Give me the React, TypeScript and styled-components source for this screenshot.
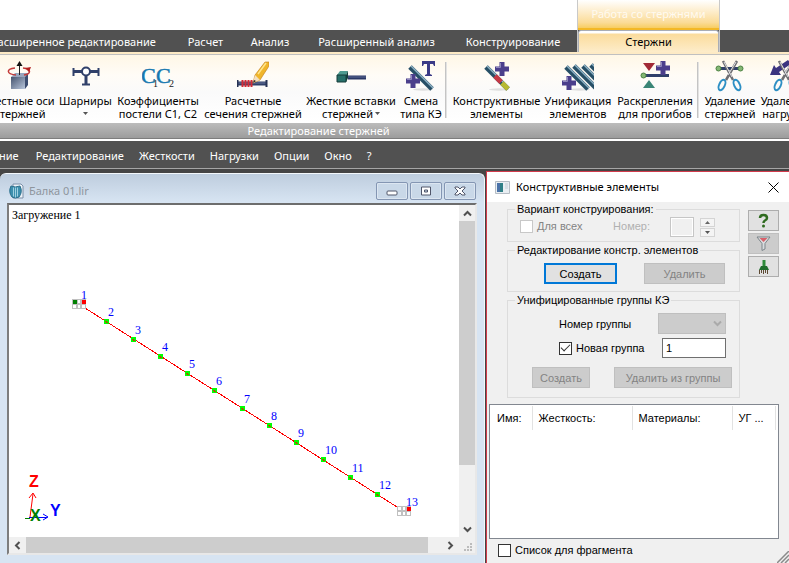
import React from "react";
import styled, { createGlobalStyle, css } from "styled-components";

const UI = `"Noto Sans", "Open Sans", sans-serif`;
const DIALOG = `"Liberation Sans", Arial, sans-serif`;
const SERIF = `"Liberation Serif", "Times New Roman", serif`;

const GlobalStyle = createGlobalStyle`
  *, *::before, *::after { box-sizing: border-box; }
  html, body, #root { height: 100%; }
  body { margin: 0; background: #515151; font: 11px/16px ${UI}; color: #000; overflow: hidden; }
  button, input, select { font: inherit; color: inherit; margin: 0; padding: 0; border-radius: 0; }
  svg { display: block; flex: none; }
`;

const Page = styled.div`
  display: flex;
  flex-direction: column;
  height: 100vh;
  overflow: hidden;
`;

/* ---------- ribbon ---------- */

const TopArea = styled.header`
  display: flex;
  flex: none;
  white-space: nowrap;
  background: linear-gradient(#fff 30px, #515151 30px);
`;

const TabStrip = styled.nav`
  display: flex;
  flex: none;
  width: 577px;
  height: 52px;
  padding: 32px 0 0;
  justify-content: flex-end;
`;

const Tab = styled.button<{ $width: number }>`
  flex: none;
  width: ${(p) => p.$width}px;
  height: 20px;
  border: 0;
  background: none;
  color: #fff;
  text-align: center;
  white-space: nowrap;
`;

const ContextGroup = styled.div`
  display: flex;
  flex-direction: column;
  width: 143px;
  height: 52px;
  border: solid #c9c9c9;
  border-width: 0 1px;
`;

const ContextTitle = styled.div`
  height: 30px;
  padding-top: 6px;
  text-align: center;
  color: #fffaf0;
  background: linear-gradient(#fff, #fdebc6 45%, #fbdc98 80%, #f7cd62);
  border-bottom: 2px solid #f3b827;
`;

const ActiveTab = styled.button`
  flex: 1;
  border: 1px solid #a9adb5;
  border-bottom: 0;
  border-radius: 3px 3px 0 0;
  background: linear-gradient(#fff 0 2px, #fbdc9c 3px, #fdecc9);
  text-align: center;
`;

const RibbonBar = styled.section`
  flex: none;
  border-top: 2px solid #fdeac5;
  background: #c0c0c0;
`;

const RibbonItems = styled.div`
  display: flex;
  height: 68px;
  margin-top: 1px;
  padding-top: 5px;
  overflow: hidden;
  background: linear-gradient(#fff7e6, #fffcf7 30%, #fafafa 55%, #fff);
`;

const RibbonButton = styled.button<{ $width: number; $clipped?: boolean }>`
  display: flex;
  flex-direction: column;
  align-items: center;
  flex: none;
  width: ${(p) => p.$width}px;
  margin-left: ${(p) => (p.$clipped ? "-17px" : "0")};
  border: 0;
  background: none;
  line-height: 13px;
  white-space: nowrap;
`;

const RibbonText = styled.span`
  display: flex;
  flex-direction: column;
  align-items: center;
  margin-top: 2px;
`;

const RibbonLine = styled.span`
  display: flex;
  align-items: center;
  gap: 2px;
  height: 13px;
`;

const RibbonDivider = styled.div`
  flex: none;
  width: 2px;
  height: 56px;
  margin: 2px 4px 0 1px;
  border-left: 1px solid #c4c4c4;
  border-right: 1px solid #e2e2e2;
`;

const RibbonCaption = styled.div`
  height: 16px;
  padding-right: 152px;
  line-height: 16px;
  text-align: center;
  color: #fff;
  background: linear-gradient(#bcbcbc, #9c9c9c);
  border-bottom: 1px solid #7d7d7d;
`;

const MenuBar = styled.nav`
  display: flex;
  flex: none;
  align-items: center;
  gap: 15px;
  height: 30px;
  padding-top: 2px;
  border-top: 2px solid #fff;
  border-bottom: 1px solid #a5a5a5;
  background: #515151;
`;

const MenuItem = styled.button<{ $first?: boolean }>`
  border: 0;
  background: none;
  color: #fff;
  white-space: nowrap;
  margin: ${(p) => (p.$first ? "0 2px 0 -1px" : "0")};
`;

/* ---------- workspace ---------- */

const Workspace = styled.main`
  display: grid;
  grid-template-columns: minmax(0, 1fr) 303px;
  flex: 1;
  min-height: 0;
  padding-top: 1px;
  column-gap: 1px;
  background: #454545;
`;

const ChildWindow = styled.section`
  display: flex;
  flex-direction: column;
  min-height: 0;
  margin-top: 3px;
  padding: 0 7px 8px;
  border: solid #f4f8fc;
  border-width: 1px 1px 0 0;
  border-radius: 6px 6px 0 0;
  background: linear-gradient(#becdde, #d7e4f2 28px);
`;

const ChildTitle = styled.header`
  display: flex;
  align-items: center;
  height: 29px;
  padding: 5px 1px 0 2px;
  gap: 5px;
  color: #8e959d;
`;

const ChildName = styled.h1`
  flex: 1;
  margin: 0;
  font: 11px/16px ${UI};
`;

const CaptionButtons = styled.div`
  display: flex;
  gap: 2px;
`;

const CaptionButton = styled.button`
  display: grid;
  place-items: center;
  width: 32px;
  height: 18px;
  border: 1px solid #8496b3;
  border-radius: 2px;
  background: #c9d8e8;
  box-shadow: inset 0 0 0 1px #dce6f1;
`;

const ViewFrame = styled.div`
  display: grid;
  grid-template-columns: minmax(0, 1fr) 16px;
  grid-template-rows: minmax(0, 1fr) 16px;
  flex: 1;
  min-height: 0;
  border: 2px solid;
  border-color: #6d6d6d #e8e8e8 #e8e8e8 #7d7d7d;
  background: #fff;
`;

const Model = styled.svg`
  width: 100%;
  height: 100%;
  min-height: 0;
`;

const ScrollTrack = styled.div<{ $horizontal?: boolean }>`
  display: flex;
  flex-direction: ${(p) => (p.$horizontal ? "row" : "column")};
  background: #f0f0f0;
`;

const ScrollArrow = styled.button`
  display: grid;
  place-items: center;
  flex: none;
  width: 17px;
  height: 16px;
  border: 0;
  background: none;
`;

const ScrollThumb = styled.div<{ $grow: number }>`
  flex: ${(p) => p.$grow} 1 0;
  background: #cdcdcd;
`;

const ScrollRest = styled.div<{ $grow: number }>`
  flex: ${(p) => p.$grow} 1 0;
`;

const Grip = styled.div`
  display: flex;
  align-items: flex-end;
  justify-content: flex-end;
  padding: 0 2px 1px 0;
  background: #f0f0f0;
`;

/* ---------- dialog ---------- */

const Dialog = styled.aside`
  display: flex;
  flex-direction: column;
  min-height: 0;
  margin-top: 1px;
  border: solid #d13b4c;
  border-width: 1px 0 0 1px;
  background: #f0f0f0;
  font: 11px/14px ${DIALOG};
  white-space: nowrap;
`;

const DialogTitle = styled.header`
  display: flex;
  flex: none;
  align-items: center;
  gap: 6px;
  height: 30px;
  padding: 0 10px 0 8px;
  background: #fff;
`;

const DialogName = styled.h2`
  flex: 1;
  margin: 0;
  font: 11px/16px ${UI};
`;

const CloseButton = styled.button`
  border: 0;
  background: none;
`;

const DialogBody = styled.div`
  display: flex;
  flex: none;
  gap: 8px;
  padding: 0 10px 0 20px;
`;

const Groups = styled.div`
  display: flex;
  flex-direction: column;
  gap: 1px;
  flex: 1;
  min-width: 0;
`;

const Group = styled.fieldset<{ $height: number }>`
  display: flex;
  flex-direction: column;
  height: ${(p) => p.$height}px;
  min-width: 0;
  margin: 0;
  padding: 0 7px;
  border: 1px solid #dcdcdc;
`;

const Legend = styled.legend`
  padding: 0 2px;
`;

const VariantRow = styled.div`
  display: flex;
  align-items: flex-start;
  padding: 3px 17px 0 5px;
  color: #838383;
`;

const CheckLabel = styled.label<{ $wide?: boolean }>`
  display: flex;
  align-items: center;
  gap: 4px;
  height: 14px;
  ${(p) => p.$wide && css`flex: 1;`}
`;

const Check = styled.input<{ $faint?: boolean }>`
  appearance: none;
  display: grid;
  place-items: center;
  width: 13px;
  height: 13px;
  border: 1px solid ${(p) => (p.$faint ? "#c8c8c8" : "#333")};
  background: #fff;
  &:checked::before {
    content: "";
    width: 9px;
    height: 5px;
    margin-top: -3px;
    border: solid #333;
    border-width: 0 0 1px 1px;
    rotate: -45deg;
  }
`;

const NumberLabel = styled.label`
  margin-right: 20px;
  color: #b0b0b0;
`;

const NumberBox = styled.input`
  width: 24px;
  height: 20px;
  margin-top: -2px;
  border: 1px solid #c6c6c6;
  background: #f0f0f0;
  box-shadow: inset 0 0 0 1px #fff;
`;

const Spinner = styled.div`
  display: flex;
  flex-direction: column;
  gap: 1px;
  margin: -1px 0 0 6px;
`;

const SpinButton = styled.button`
  display: grid;
  place-items: center;
  width: 15px;
  height: 9px;
  border: 1px solid #d4d4d4;
  background: #f4f4f4;
`;

const ButtonRow = styled.div<{ $gap: number; $top: number; $left: number }>`
  display: flex;
  gap: ${(p) => p.$gap}px;
  padding-top: ${(p) => p.$top}px;
  padding-left: ${(p) => p.$left}px;
`;

const PushButton = styled.button<{ $width: number; $primary?: boolean }>`
  width: ${(p) => p.$width}px;
  height: 21px;
  line-height: 14px;
  border: 1px solid #bfbfbf;
  background: #ccc;
  color: #838383;
  ${(p) =>
    p.$primary &&
    css`
      border: 2px solid #0078d7;
      background: #e1e1e1;
      color: #000;
    `}
`;

const FieldRow = styled.div<{ $top: number }>`
  display: flex;
  align-items: center;
  justify-content: space-between;
  padding: ${(p) => p.$top}px 6px 0 44px;
`;

const SelectWrap = styled.div`
  display: grid;
  align-items: center;
  justify-items: end;
  & > * { grid-area: 1 / 1; }
  & > svg { margin-right: 4px; pointer-events: none; }
`;

const GroupSelect = styled.select`
  appearance: none;
  width: 68px;
  height: 21px;
  border: 1px solid #bfbfbf;
  background: #ccc;
  opacity: 1;
`;

const GroupInput = styled.input`
  width: 64px;
  height: 20px;
  padding: 0 3px;
  border: 1px solid #6f6f6f;
  background: #fff;
`;

const SideButtons = styled.div`
  display: flex;
  flex-direction: column;
  gap: 2px;
  padding-top: 8px;
`;

const SideButton = styled.button<{ $disabled?: boolean }>`
  display: grid;
  place-items: center;
  width: 31px;
  height: 21px;
  border: 1px solid ${(p) => (p.$disabled ? "#bfbfbf" : "#adadad")};
  background: ${(p) => (p.$disabled ? "#ccc" : "#e1e1e1")};
`;

const ListBox = styled.div`
  flex: 1;
  min-height: 0;
  margin: 6px 10px 0 2px;
  border: 1px solid #828790;
  background: #fff;
`;

const ListTable = styled.table`
  width: 285px;
  border-collapse: collapse;
  table-layout: fixed;
  margin-top: 1px;
`;

const HeaderCell = styled.th<{ $width: number; $indent: number }>`
  width: ${(p) => p.$width}px;
  height: 24px;
  padding: 0 0 0 ${(p) => p.$indent}px;
  border-right: 1px solid #e2e2e2;
  font-weight: 400;
  text-align: left;
`;

const DialogFooter = styled.footer`
  display: flex;
  flex: none;
  justify-content: space-between;
  height: 24px;
  padding: 4px 0 0 11px;
`;

const SizeGrip = styled.svg`
  align-self: flex-end;
`;

/* ---------- icons ---------- */

const Plus = ({ x, y }: { x: number; y: number }) => (
  <g>
    <path d={`M${x - 2.5} ${y - 7}h5v4.500h4.500v5h-4.500v4.500h-5v-4.500h-4.500v-5h4.500z`} fill="#4b3f8c" />
    <path d={`M${x - 1.5} ${y - 6}v4.500h-4.500`} stroke="#8f88bd" fill="none" />
  </g>
);

const Rod = ({ x, y, tail = 22 }: { x: number; y: number; tail?: number }) => (
  <g>
    <path d={`M${x} ${y}l${tail} ${tail}`} stroke="#274f66" strokeWidth="5" />
    <path d={`M${x + 1} ${y - 1}l${tail} ${tail}`} stroke="#8fb3c6" strokeWidth="1.500" />
  </g>
);

const Scissors = () => (
  <g fill="none">
    <path d="M9 1L19 20M23 1L12 20" stroke="#6e6e72" strokeWidth="2.500" />
    <path d="M10 2L18 17M22 2L14 15" stroke="#e2e2e6" strokeWidth="1" />
    <ellipse cx="8" cy="25" rx="2.800" ry="5.500" transform="rotate(25 8 25)" stroke="#2d8fc4" strokeWidth="2" />
    <ellipse cx="23" cy="25" rx="2.800" ry="5.500" transform="rotate(-25 23 25)" stroke="#2d8fc4" strokeWidth="2" />
  </g>
);

const Shadow = () => <ellipse cx="18" cy="29.500" rx="10" ry="1.200" fill="#dedede" />;

const icons: Record<string, React.ReactNode> = {
  axes: (
    <>
      <defs>
        <linearGradient id="cube" x1="0" y1="0" x2="1" y2="1">
          <stop offset="0" stopColor="#46546f" />
          <stop offset="1" stopColor="#b9c6dc" />
        </linearGradient>
      </defs>
      <path d="M7 17l4-4h13l-3 4z" fill="#98a5bd" />
      <path d="M21 17l3-4v12l-3 4z" fill="#3d4d70" />
      <path d="M7 17h14v12h-14z" fill="url(#cube)" />
      <path d="M12 15C2 14 2 9 11 8M19 8c9 1 8 6 1 7" stroke="#c33a3a" strokeWidth="1.500" fill="none" />
      <path d="M21 8l6-1-2 5z" fill="#b51f1f" />
      <path d="M15.500 15V4" stroke="#222" />
      <path d="M12.500 6l3-5 3 5z" fill="#111" />
    </>
  ),
  hinge: (
    <g stroke="#30406a" fill="none">
      <path d="M3 11.500h9M20 11.500h9M16 16v8" strokeWidth="3" />
      <path d="M3.500 8v8M28.500 8v8M12 24.500h8" strokeWidth="2" />
      <circle cx="16" cy="11.500" r="4" strokeWidth="2" fill="#fff" />
    </g>
  ),
  soil: (
    <g fontFamily={SERIF}>
      <text x="-1" y="23" fontSize="22" fill="#1578b0" stroke="#1578b0" strokeWidth=".5">C</text>
      <text x="14" y="23" fontSize="22" fill="#1578b0" stroke="#1578b0" strokeWidth=".5">C</text>
      <text x="11" y="27" fontSize="10" fill="#222">1</text>
      <text x="27" y="27" fontSize="10" fill="#222">2</text>
    </g>
  ),
  sections: (
    <>
      <path d="M0 23.500h30" stroke="#30406a" strokeWidth="4" />
      <path d="M0 23h30" stroke="#66759c" />
      <path d="M.5 20v7M29.500 20v7" stroke="#263254" strokeWidth="2" />
      <path d="M5.500 20v7M8.500 20v7M11.500 20v7M14.500 20v7" stroke="#d42a35" strokeWidth="2" />
      <path d="M16 23l2-8 10-13h4v4l-9 14z" fill="#f0b52b" stroke="#c07a18" strokeWidth=".6" />
      <path d="M16 23l2-8 5 5z" fill="#f3dfc0" />
      <path d="M16 23l1-3 2 1z" fill="#222" />
      <path d="M21 14l8-11" stroke="#ffe58a" strokeWidth="1.500" />
    </>
  ),
  rigid: (
    <>
      <path d="M13 17.500h18" stroke="#2a3765" strokeWidth="4" />
      <path d="M13 17h18" stroke="#5d6a96" />
      <path d="M2 15l3-4h8l-2 4z" fill="#4f9b91" />
      <path d="M11 15l2-4v7l-2 4z" fill="#123f3c" />
      <path d="M2 15h9v7h-9z" fill="#276f69" stroke="#163c3a" />
    </>
  ),
  type: (
    <>
      <Shadow />
      <Rod x={5} y={7} />
      <Plus x={8} y={21} />
      <path d="M17 1h13v5h-1l-1-2h-3v10l2 1v1h-7v-1l2-1v-10h-3l-1 2h-1z" fill="#3b3a86" />
    </>
  ),
  members: (
    <>
      <Shadow />
      <Rod x={5} y={7} />
      <path d="M14 16l6 6" stroke="#c73845" strokeWidth="5" />
      <path d="M21 23l6 6" stroke="#b7b932" strokeWidth="5" />
      <Plus x={21} y={9} />
    </>
  ),
  unify: (
    <>
      <Shadow />
      <Rod x={4} y={7} />
      <Rod x={12} y={6} />
      <Rod x={21} y={6} />
      <Rod x={29} y={5} />
      <Plus x={7} y={23} />
    </>
  ),
  braces: (
    <>
      <path d="M4 3h12l-6 8z" fill="#a22a36" />
      <path d="M5 15.500h25" stroke="#30406a" strokeWidth="3" />
      <circle cx="4.500" cy="15.500" r="2.500" fill="#84b773" stroke="#4b8143" />
      <path d="M4 28h12l-6-8z" fill="#3a8576" />
      <Plus x={24} y={8} />
    </>
  ),
  cutRods: (
    <>
      <path d="M3 8.500h25" stroke="#30406a" strokeWidth="3" />
      <circle cx="4.500" cy="8.500" r="2.500" fill="#84b773" stroke="#4b8143" />
      <circle cx="26.500" cy="8.500" r="2.500" fill="#84b773" stroke="#4b8143" />
      <Scissors />
    </>
  ),
  cutLoads: (
    <>
      <path d="M0 15l4-10 2 3 12-8 3 4-12 8 2 3z" fill="#3b3480" />
      <Scissors />
    </>
  ),
};

const RibbonIcon = ({ name }: { name: string }) => (
  <svg width="32" height="32" viewBox="0 0 32 32" aria-hidden="true">
    {icons[name]}
  </svg>
);

const DropArrow = () => (
  <svg width="5" height="3" aria-hidden="true">
    <path d="M0 0h5L2.500 3z" fill="#555" />
  </svg>
);

const Chevron = ({ turn, color = "#505050" }: { turn: number; color?: string }) => (
  <svg width="9" height="9" viewBox="0 0 9 9" aria-hidden="true">
    <path d="M1 6.500L4.500 3 8 6.500" fill="none" stroke={color} strokeWidth="2" transform={`rotate(${turn} 4.500 4.500)`} />
  </svg>
);

/* ---------- data ---------- */

const tabs = [
  { label: "Расширенное редактирование", width: 203 },
  { label: "Расчет", width: 61 },
  { label: "Анализ", width: 68 },
  { label: "Расширенный анализ", width: 145 },
  { label: "Конструирование", width: 128 },
];

type Item = { icon: string; width: number; lines: string[]; drop?: boolean; clipped?: boolean };

const ribbon: Item[][] = [
  [
    { icon: "axes", width: 74, lines: ["Местные оси", "стержней"], clipped: true },
    { icon: "hinge", width: 57, lines: ["Шарниры", ""], drop: true },
    { icon: "soil", width: 88, lines: ["Коэффициенты", "постели С1, С2"] },
    { icon: "sections", width: 102, lines: ["Расчетные", "сечения стержней"] },
    { icon: "rigid", width: 94, lines: ["Жесткие вставки", "стержней"], drop: true },
    { icon: "type", width: 46, lines: ["Смена", "типа КЭ"] },
  ],
  [
    { icon: "members", width: 91, lines: ["Конструктивные", "элементы"] },
    { icon: "unify", width: 72, lines: ["Унификация", "элементов"] },
    { icon: "braces", width: 82, lines: ["Раскрепления", "для прогибов"] },
  ],
  [
    { icon: "cutRods", width: 54, lines: ["Удаление", "стержней"] },
    { icon: "cutLoads", width: 58, lines: ["Удаление", "нагрузок"] },
  ],
];

const menu = ["ние", "Редактирование", "Жесткости", "Нагрузки", "Опции", "Окно", "?"];

const nodes = [
  [97, 116], [124, 134], [151, 151], [178, 168], [205, 185], [233, 203],
  [260, 220], [287, 237], [314, 254], [341, 272], [368, 289],
];

const columns = [
  { label: "Имя:", width: 42, indent: 7 },
  { label: "Жесткость:", width: 100, indent: 6 },
  { label: "Материалы:", width: 100, indent: 6 },
  { label: "УГ ...", width: 43, indent: 6 },
];

const Support = ({ x, y, left }: { x: number; y: number; left?: boolean }) => (
  <g shapeRendering="crispEdges">
    <path d={`M${x} ${y}h14v10h-14z`} fill="#c0c0c0" />
    {[0, 5].map((dy) => (
      <path key={dy} d={`M${x + 1} ${y + 1 + dy}h3v3h-3zM${x + 6} ${y + 1 + dy}h2v3h-2zM${x + 10} ${y + 1 + dy}h3v3h-3z`} fill="#fff" />
    ))}
    {left && <path d={`M${x + 1} ${y + 1}h4v4h-4z`} fill="#008000" />}
    <path d={`M${x + 10} ${y + 1}h4v4h-4z`} fill="#f00" />
  </g>
);

const BeamModel = () => (
  <Model role="img" aria-label="Загружение 1">
    <text x="3" y="14" fontFamily={SERIF} fontSize="12">Загружение 1</text>
    <path d="M76 103L388 302" stroke="#f00" shapeRendering="crispEdges" />
    <g fill="#0f0" shapeRendering="crispEdges">
      {nodes.map(([x, y]) => (
        <rect key={x} x={x - 2} y={y - 2} width="5" height="5" />
      ))}
    </g>
    <g stroke="#b05000" shapeRendering="crispEdges">
      {nodes.map(([x, y]) => (
        <path key={x} d={`M${x - 1} ${y}l3 2`} />
      ))}
    </g>
    <Support x={63} y={94} left />
    <Support x={388} y={301} />
    <g fontFamily={SERIF} fontSize="12" fill="#00f">
      <text x="72" y="94">1</text>
      {nodes.map(([x, y], i) => (
        <text key={x} x={x + 2} y={y - 5}>{i + 2}</text>
      ))}
      <text x="397" y="301">13</text>
    </g>
    <g fontFamily={DIALOG} fontSize="16" fontWeight="700">
      <path d="M21 312L24 289M20 293l4-5 3 5" stroke="#f00" fill="none" />
      <path d="M16 313.500h5" stroke="#008000" />
      <path d="M20 312.500h18M34 309l5 3-5 3" stroke="#00f" fill="none" />
      <text x="20" y="282" fill="#f00">Z</text>
      <text x="21" y="316" fill="#008000">X</text>
      <text x="41" y="311" fill="#00f">Y</text>
    </g>
  </Model>
);

export default function App() {
  return (
    <Page>
      <GlobalStyle />
      <TopArea>
        <TabStrip>
          {tabs.map((t) => (
            <Tab key={t.label} $width={t.width}>{t.label}</Tab>
          ))}
        </TabStrip>
        <ContextGroup>
          <ContextTitle>Работа со стержнями</ContextTitle>
          <ActiveTab>Стержни</ActiveTab>
        </ContextGroup>
      </TopArea>

      <RibbonBar>
        <RibbonItems>
          {ribbon.map((group, g) => (
            <React.Fragment key={g}>
              {g > 0 && <RibbonDivider />}
              {group.map((item) => (
                <RibbonButton key={item.icon} $width={item.width} $clipped={item.clipped}>
                  <RibbonIcon name={item.icon} />
                  <RibbonText>
                    <RibbonLine>{item.lines[0]}</RibbonLine>
                    <RibbonLine>
                      {item.lines[1]}
                      {item.drop && <DropArrow />}
                    </RibbonLine>
                  </RibbonText>
                </RibbonButton>
              ))}
            </React.Fragment>
          ))}
        </RibbonItems>
        <RibbonCaption>Редактирование стержней</RibbonCaption>
      </RibbonBar>

      <MenuBar>
        {menu.map((m, i) => (
          <MenuItem key={m} $first={i === 0}>{m}</MenuItem>
        ))}
      </MenuBar>

      <Workspace>
        <ChildWindow>
          <ChildTitle>
            <svg width="15" height="16" viewBox="0 0 15 16" aria-hidden="true">
              <path d="M4 1h8l2 2v12H4z" fill="#eef3f8" stroke="#7c90a8" />
              <path d="M2 3q4 2 9 0 3 6-1 11-4 2-7 0Q-1 9 2 3z" fill="#3d8fae" stroke="#2a6f8c" />
              <path d="M4.500 4.500v9M6.500 4.500v10M8.500 4.500v9" stroke="#9fd0e0" />
            </svg>
            <ChildName>Балка 01.lir</ChildName>
            <CaptionButtons>
              <CaptionButton aria-label="Свернуть">
                <svg width="12" height="10"><rect x="1" y="5" width="10" height="4" rx="1" fill="#fff" stroke="#50566a" /></svg>
              </CaptionButton>
              <CaptionButton aria-label="Развернуть">
                <svg width="12" height="10"><path d="M1.500 1h9v8h-9z" fill="#fff" stroke="#50566a" /><path d="M4.500 4h3v2h-3z" fill="#c9d8e8" stroke="#50566a" /></svg>
              </CaptionButton>
              <CaptionButton aria-label="Закрыть">
                <svg width="12" height="10"><path d="M1 1h3l2 2 2-2h3v1L8 5l3 3v1H8L6 7 4 9H1V8l3-3-3-3z" fill="#fff" stroke="#50566a" /></svg>
              </CaptionButton>
            </CaptionButtons>
          </ChildTitle>
          <ViewFrame>
            <BeamModel />
            <ScrollTrack>
              <ScrollArrow aria-label="Вверх"><Chevron turn={0} /></ScrollArrow>
              <ScrollThumb $grow={244} />
              <ScrollRest $grow={56} />
              <ScrollArrow aria-label="Вниз"><Chevron turn={180} /></ScrollArrow>
            </ScrollTrack>
            <ScrollTrack $horizontal>
              <ScrollArrow aria-label="Влево"><Chevron turn={-90} /></ScrollArrow>
              <ScrollThumb $grow={403} />
              <ScrollRest $grow={14} />
              <ScrollArrow aria-label="Вправо"><Chevron turn={90} /></ScrollArrow>
            </ScrollTrack>
            <Grip>
              <svg width="9" height="9" aria-hidden="true">
                <path d="M6 0h2v2h-2zM3 3h2v2h-2zM6 3h2v2h-2zM0 6h2v2h-2zM3 6h2v2h-2zM6 6h2v2h-2z" fill="#bcbcbc" />
              </svg>
            </Grip>
          </ViewFrame>
        </ChildWindow>

        <Dialog>
          <DialogTitle>
            <svg width="15" height="13" viewBox="0 0 15 13" aria-hidden="true">
              <path d="M.5.5h14v12H.5z" fill="#e9eef2" stroke="#b5bcc4" />
              <path d="M2 2h6v9H2z" fill="#2f7f86" />
              <path d="M2 2h3v9H2z" fill="#4a72a8" />
              <path d="M10 3h3M10 5h3M10 7h3" stroke="#c3ccd4" />
            </svg>
            <DialogName>Конструктивные элементы</DialogName>
            <CloseButton aria-label="Закрыть">
              <svg width="11" height="11"><path d="M.5.5l10 10M10.500.5l-10 10" stroke="#000" /></svg>
            </CloseButton>
          </DialogTitle>
          <DialogBody>
            <Groups>
              <Group $height={40}>
                <Legend>Вариант конструирования:</Legend>
                <VariantRow>
                  <CheckLabel $wide>
                    <Check type="checkbox" disabled $faint />
                    Для всех
                  </CheckLabel>
                  <NumberLabel htmlFor="variant">Номер:</NumberLabel>
                  <NumberBox id="variant" disabled />
                  <Spinner>
                    <SpinButton aria-label="Больше" disabled><svg width="5" height="3"><path d="M0 3h5L2.500 0z" fill="#666" /></svg></SpinButton>
                    <SpinButton aria-label="Меньше" disabled><DropArrow /></SpinButton>
                  </Spinner>
                </VariantRow>
              </Group>
              <Group $height={49}>
                <Legend>Редактирование констр. элементов</Legend>
                <ButtonRow $gap={27} $top={6} $left={29}>
                  <PushButton $width={73} $primary>Создать</PushButton>
                  <PushButton $width={81} disabled>Удалить</PushButton>
                </ButtonRow>
              </Group>
              <Group $height={105}>
                <Legend>Унифицированные группы КЭ</Legend>
                <FieldRow $top={6}>
                  <label htmlFor="group">Номер группы</label>
                  <SelectWrap>
                    <GroupSelect id="group" disabled />
                    <Chevron turn={180} color="#aaa" />
                  </SelectWrap>
                </FieldRow>
                <FieldRow $top={4}>
                  <CheckLabel>
                    <Check type="checkbox" defaultChecked />
                    Новая группа
                  </CheckLabel>
                  <GroupInput defaultValue="1" aria-label="Новая группа" />
                </FieldRow>
                <ButtonRow $gap={24} $top={9} $left={17}>
                  <PushButton $width={58} disabled>Создать</PushButton>
                  <PushButton $width={118} disabled>Удалить из группы</PushButton>
                </ButtonRow>
              </Group>
            </Groups>
            <SideButtons>
              <SideButton aria-label="Справка">
                <svg width="11" height="15" viewBox="0 0 11 15"><path d="M2 5q0-3 3.500-3T9 5q0 1.500-2 2.500-1.500.8-1.500 2.500" fill="none" stroke="#2f6b1f" strokeWidth="2.500" /><circle cx="5.500" cy="13" r="1.500" fill="#2f6b1f" /></svg>
              </SideButton>
              <SideButton aria-label="Фильтр" $disabled disabled>
                <svg width="15" height="15" viewBox="0 0 15 15"><path d="M1 1h13L9 7.500V13l-3 1.500v-7z" fill="#d8dcde" stroke="#7c858a" /><path d="M3.500 2h8l-4 4z" fill="#d9606a" /></svg>
              </SideButton>
              <SideButton aria-label="Очистить">
                <svg width="12" height="16" viewBox="0 0 12 16"><path d="M4.500 1h3v6h-3z" fill="#2e8b3a" /><path d="M3 7h6l2 4H1z" fill="#1f6e2c" /><path d="M1.500 11v4M3.500 11v3M5.500 11v4M7.500 11v3M9.500 11v4" stroke="#5d4a34" /></svg>
              </SideButton>
            </SideButtons>
          </DialogBody>
          <ListBox>
            <ListTable>
              <thead>
                <tr>
                  {columns.map((c) => (
                    <HeaderCell key={c.label} scope="col" $width={c.width} $indent={c.indent}>{c.label}</HeaderCell>
                  ))}
                </tr>
              </thead>
            </ListTable>
          </ListBox>
          <DialogFooter>
            <CheckLabel>
              <Check type="checkbox" />
              Список для фрагмента
            </CheckLabel>
            <SizeGrip width="12" height="12" aria-hidden="true">
              <path d="M0 12L12 0M4 12l8-8M8 12l4-4" stroke="#8a8a8a" strokeWidth="1.500" />
            </SizeGrip>
          </DialogFooter>
        </Dialog>
      </Workspace>
    </Page>
  );
}
